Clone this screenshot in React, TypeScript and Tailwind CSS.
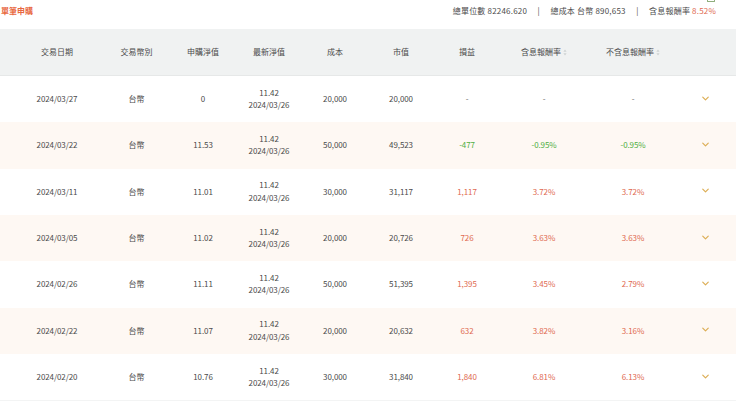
import { ChevronDown } from "lucide-react";

const columns = "grid grid-cols-[80px_79px_54px_78px_54px_78px_54px_100px_78px_66px]";

type Row = {
  date: string;
  buyNav: string;
  cost: string;
  value: string;
  profit: string;
  withDiv: string;
  noDiv: string;
  tone?: "up" | "down";
};

const rows: Row[] = [
  { date: "2024/03/27", buyNav: "0", cost: "20,000", value: "20,000", profit: "-", withDiv: "-", noDiv: "-" },
  { date: "2024/03/22", buyNav: "11.53", cost: "50,000", value: "49,523", profit: "-477", withDiv: "-0.95%", noDiv: "-0.95%", tone: "down" },
  { date: "2024/03/11", buyNav: "11.01", cost: "30,000", value: "31,117", profit: "1,117", withDiv: "3.72%", noDiv: "3.72%", tone: "up" },
  { date: "2024/03/05", buyNav: "11.02", cost: "20,000", value: "20,726", profit: "726", withDiv: "3.63%", noDiv: "3.63%", tone: "up" },
  { date: "2024/02/26", buyNav: "11.11", cost: "50,000", value: "51,395", profit: "1,395", withDiv: "3.45%", noDiv: "2.79%", tone: "up" },
  { date: "2024/02/22", buyNav: "11.07", cost: "20,000", value: "20,632", profit: "632", withDiv: "3.82%", noDiv: "3.16%", tone: "up" },
  { date: "2024/02/20", buyNav: "10.76", cost: "30,000", value: "31,840", profit: "1,840", withDiv: "6.81%", noDiv: "6.13%", tone: "up" },
];

function SortIcon() {
  return (
    <svg width="4" height="7" viewBox="0 0 4 7" className="ml-[2px] shrink-0">
      <path d="M2 0.5 L3.6 2.8 H0.4 Z" fill="#cfd3d3" />
      <path d="M2 6.5 L3.6 4.2 H0.4 Z" fill="#cfd3d3" />
    </svg>
  );
}

function TableRow({ row, shaded }: { row: Row; shaded: boolean }) {
  const toneClass =
    row.tone === "up" ? "text-[#e0694f]" : row.tone === "down" ? "text-[#4fae3f]" : "text-[#666]";

  return (
    <div className={`${columns} h-[46.33px] items-center pl-[17px] text-center tracking-[-0.1px] ${shaded ? "bg-[#fef8f3]" : "bg-white"}`}>
      <div>{row.date}</div>
      <div>台幣</div>
      <div>{row.buyNav}</div>
      <div className="leading-[12.5px]">
        <div>11.42</div>
        <div>2024/03/26</div>
      </div>
      <div>{row.cost}</div>
      <div>{row.value}</div>
      <div className={toneClass}>{row.profit}</div>
      <div className={toneClass}>{row.withDiv}</div>
      <div className={toneClass}>{row.noDiv}</div>
      <div className="flex justify-center">
        <ChevronDown className="h-[11px] w-[11px] -translate-y-px text-[#dcae55]" strokeWidth={2.6} />
      </div>
    </div>
  );
}

export default function App() {
  return (
    <div
      className="relative h-[412px] w-[740px] overflow-hidden bg-white text-[8px] text-[#4a4a4a]"
      style={{ fontFamily: '"Noto Sans CJK TC", "Noto Sans", sans-serif' }}
    >
      {/* Corner of the export button, cut off by the top edge */}
      <div className="absolute right-[25px] top-0 h-[2px] w-[8px] rounded-b-[1px] border-x border-b border-[#8fae7c]" />

      {/* Summary */}
      <div className="flex h-[29px] items-start justify-between pr-[24px] pt-[5px] leading-[12px]">
        <div className="pl-[1px] font-bold text-[#e8683f]">單筆申購</div>
        <div className="flex items-center tracking-[0.2px]">
          <span>總單位數 82246.620</span>
          <span className="mx-[10.5px]">|</span>
          <span>總成本 台幣 890,653</span>
          <span className="mx-[10.5px]">|</span>
          <span>
            含息報酬率 <span className="text-[#e0694f]">8.52%</span>
          </span>
        </div>
      </div>

      <div className="w-[736px]">
        {/* Header */}
        <div className={`${columns} h-[47px] items-center border-b border-[#e6e8e8] bg-[#f0f2f2] pl-[17px] text-center`}>
          <div>交易日期</div>
          <div>交易幣別</div>
          <div>申購淨值</div>
          <div>最新淨值</div>
          <div>成本</div>
          <div>市值</div>
          <div>損益</div>
          <div className="flex items-center justify-center">
            含息報酬率
            <SortIcon />
          </div>
          <div className="flex items-center justify-center">
            不含息報酬率
            <SortIcon />
          </div>
          <div />
        </div>

        {rows.map((row, i) => (
          <TableRow key={row.date} row={row} shaded={i % 2 === 1} />
        ))}
        <div className="h-px bg-[#f3f4f4]" />
      </div>
    </div>
  );
}
